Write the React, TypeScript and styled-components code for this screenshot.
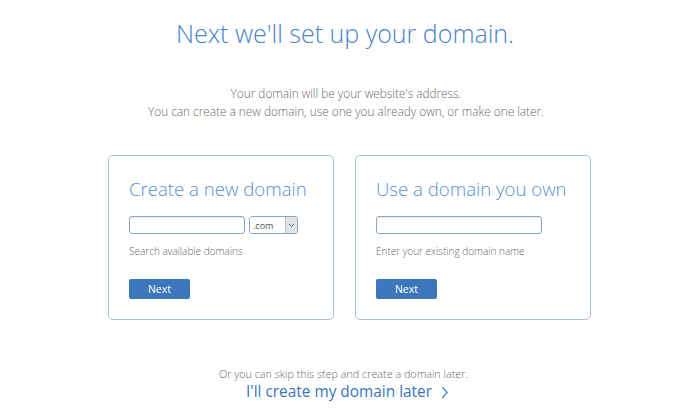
import React from "react";
import styled, { createGlobalStyle } from "styled-components";

const GlobalStyle = createGlobalStyle`
    html, body {
        margin: 0;
        padding: 0;
        background: #ffffff;
    }
    body {
        font-family: "Open Sans", "Liberation Sans", sans-serif;
        color: #666666;
    }
`

const StyledPage = styled.div`
    display: flex;
    flex-direction: column;
    align-items: center;
    width: 699px;
    padding-top: 18px;
`

const StyledTitle = styled.h1`
    margin: 0;
    padding-right: 9px;
    font-size: 25px;
    line-height: 31px;
    font-weight: 300;
    color: #4a84c6;
`

const StyledIntro = styled.p`
    margin: 35px 0 0 0;
    padding-right: 7px;
    font-size: 11.8px;
    line-height: 18px;
    font-weight: 300;
    color: #6a6a6a;
    text-align: center;
`

const StyledCardRow = styled.div`
    display: flex;
    flex-direction: row;
    justify-content: center;
    gap: 21px;
    margin-top: 35px;
`

const StyledCard = styled.div<{ $width: number }>`
    display: flex;
    flex-direction: column;
    align-items: flex-start;
    box-sizing: border-box;
    width: ${(p) => p.$width}px;
    padding: 21px 20px 20px 20px;
    border: 1px solid #a9c1de;
    border-radius: 5px;
`

const StyledCardTitle = styled.h2`
    margin: 0;
    font-size: 18.6px;
    line-height: 23px;
    font-weight: 300;
    color: #5a8fcd;
    white-space: nowrap;
`

const StyledFieldRow = styled.div`
    display: flex;
    flex-direction: row;
    gap: 4px;
    margin-top: 16px;
`

const StyledInput = styled.input<{ $width: number }>`
    box-sizing: border-box;
    width: ${(p) => p.$width}px;
    height: 18px;
    margin: 0;
    padding: 0 4px;
    border: 1px solid #8ea5bf;
    border-radius: 3px;
    box-shadow: inset 0 1px 1px rgba(0, 0, 0, 0.08);
    font-family: inherit;
    font-size: 11px;
    outline: none;
`

const StyledSelectBox = styled.div`
    display: flex;
    flex-direction: row;
    box-sizing: border-box;
    width: 49px;
    height: 18px;
    border: 1px solid #8ea5bf;
    border-radius: 3px;
    overflow: hidden;
`

const StyledSelect = styled.select`
    appearance: none;
    flex: 1;
    min-width: 0;
    margin: 0;
    padding: 0 0 0 3px;
    border: none;
    background: #ffffff;
    font-family: inherit;
    font-size: 9px;
    color: #555555;
    outline: none;
`

const StyledArrowBox = styled.div`
    display: flex;
    align-items: center;
    justify-content: center;
    width: 11px;
    border-left: 1px solid #b8c2cc;
    background: #e1e3e6;
`

const StyledHint = styled.p`
    margin: 10px 0 0 0;
    font-size: 10px;
    line-height: 15px;
    font-weight: 300;
    color: #666666;
    white-space: nowrap;
`

const StyledButton = styled.button`
    width: 61px;
    height: 20px;
    margin-top: 20px;
    padding: 0;
    border: none;
    border-radius: 2px;
    background: #3c77bc;
    color: #ffffff;
    font-family: inherit;
    font-size: 10.5px;
    font-weight: 400;
    cursor: pointer;
`

const StyledSkipText = styled.p`
    margin: 45px 0 0 0;
    padding-right: 12px;
    font-size: 10.8px;
    line-height: 18px;
    font-weight: 300;
    color: #6a6a6a;
`

const StyledSkipLink = styled.a`
    display: flex;
    flex-direction: row;
    align-items: center;
    gap: 6px;
    padding-right: 2px;
    font-size: 15.4px;
    line-height: 18px;
    font-weight: 400;
    color: #3b74ba;
    text-decoration: none;
    cursor: pointer;
`

const Chevron = ({ size, color }: { size: number; color: string }) => (
    <svg width={size} height={size} viewBox="0 0 12 12" fill="none">
        <path d="M4 1 L8.5 6 L4 11" stroke={color} strokeWidth="1.1" />
    </svg>
)

const ArrowDown = () => (
    <svg width="7" height="5" viewBox="0 0 7 5" fill="none">
        <path d="M1 1 L3.5 3.5 L6 1" stroke="#6b7580" strokeWidth="1" />
    </svg>
)

export default function App() {
    return (
        <>
            <GlobalStyle />
            <StyledPage>
                <StyledTitle>Next we'll set up your domain.</StyledTitle>
                <StyledIntro>
                    Your domain will be your website's address.
                    <br />
                    You can create a new domain, use one you already own, or make one later.
                </StyledIntro>

                <StyledCardRow>
                    <StyledCard $width={226}>
                        <StyledCardTitle>Create a new domain</StyledCardTitle>
                        <StyledFieldRow>
                            <StyledInput $width={116} type="text" />
                            <StyledSelectBox>
                                <StyledSelect defaultValue=".com">
                                    <option>.com</option>
                                    <option>.net</option>
                                    <option>.org</option>
                                </StyledSelect>
                                <StyledArrowBox>
                                    <ArrowDown />
                                </StyledArrowBox>
                            </StyledSelectBox>
                        </StyledFieldRow>
                        <StyledHint>Search available domains</StyledHint>
                        <StyledButton>Next</StyledButton>
                    </StyledCard>

                    <StyledCard $width={236}>
                        <StyledCardTitle>Use a domain you own</StyledCardTitle>
                        <StyledFieldRow>
                            <StyledInput $width={166} type="text" />
                        </StyledFieldRow>
                        <StyledHint>Enter your existing domain name</StyledHint>
                        <StyledButton>Next</StyledButton>
                    </StyledCard>
                </StyledCardRow>

                <StyledSkipText>Or you can skip this step and create a domain later.</StyledSkipText>
                <StyledSkipLink>
                    I'll create my domain later
                    <Chevron size={13} color="#3b74ba" />
                </StyledSkipLink>
            </StyledPage>
        </>
    );
}
